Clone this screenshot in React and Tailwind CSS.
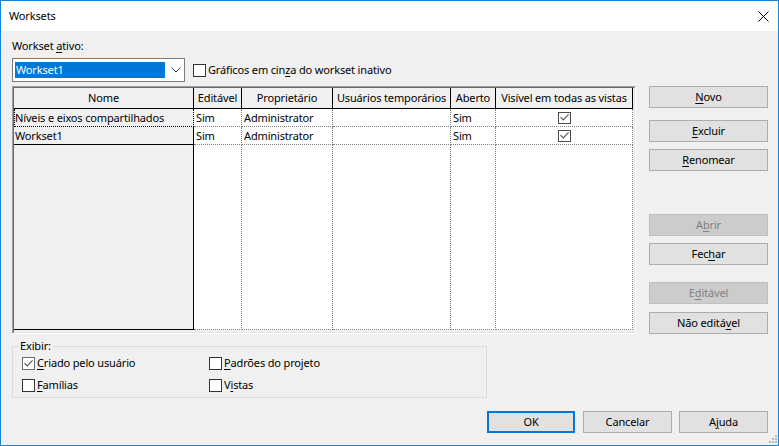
import React from "react";

const U = ({ children }) => <span className="underline underline-offset-[2px] decoration-[1px]">{children}</span>;

function CheckMark({ color = "#555555" }) {
  return (
    <svg width="11" height="11" viewBox="0 0 11 11" className="block">
      <path d="M1.5 5.2 L4.3 8 L9.6 2.4" fill="none" stroke={color} strokeWidth="1.1" />
    </svg>
  );
}

function Box({ checked, light }) {
  return (
    <div
      className={
        "w-[13px] h-[13px] border bg-white flex items-center justify-center shrink-0 " +
        (light ? "border-[#6d6d6d]" : "border-[#333333]")
      }
    >
      {checked && <CheckMark />}
    </div>
  );
}

function Btn({ children, disabled, className = "" }) {
  return (
    <div
      className={
        "h-[22px] flex items-center justify-center border leading-[16px] " +
        (disabled
          ? "bg-[#cccccc] border-[#bfbfbf] text-[#838383] "
          : "bg-[#e1e1e1] border-[#adadad] text-black ") +
        className
      }
    >
      {children}
    </div>
  );
}

function DataCol({ w, header, cells, center }) {
  return (
    <div className={w + " flex flex-col shrink-0"}>
      <div className="h-[21px] border-r border-b border-black flex items-center justify-center whitespace-nowrap overflow-hidden">
        {header}
      </div>
      {cells.map((c, i) => (
        <div
          key={i}
          className={
            "h-[18px] bg-white border-r border-b border-dotted border-[#808080] flex items-center whitespace-nowrap overflow-hidden " +
            (center ? "justify-center" : "pl-[2px]")
          }
        >
          {c}
        </div>
      ))}
      <div className="flex-1 bg-white border-r border-b border-dotted border-[#808080]" />
    </div>
  );
}

function CellCheck() {
  return (
    <div className="w-[13px] h-[12px] border border-[#4a4a4a] bg-white flex items-center justify-center">
      <CheckMark color="#5a5a5a" />
    </div>
  );
}

function Opt({ checked, light, children }) {
  return (
    <div className="h-[16px] flex items-center">
      <Box checked={checked} light={light} />
      <span className="ml-[2px] leading-[16px]">{children}</span>
    </div>
  );
}

export default function App() {
  return (
    <div className="relative w-[779px] h-[446px] border border-[#1883d7] bg-[#f0f0f0] flex flex-col overflow-hidden font-['Noto_Sans',sans-serif] text-[11px] text-black leading-[16px] tracking-[-0.15px]">
      {/* Title bar */}
      <div className="h-[30px] bg-white flex items-center justify-between pl-[8px] pr-[9px] shrink-0">
        <span>Worksets</span>
        <svg width="11" height="11" viewBox="0 0 11 11" className="block">
          <path d="M0.5 0.5 L10.5 10.5 M10.5 0.5 L0.5 10.5" stroke="#000" strokeWidth="1" />
        </svg>
      </div>

      {/* Body */}
      <div className="flex-1 flex flex-col pl-[11px] pr-[10px]">
        <div className="mt-[7px] h-[16px]">
          Workset <U>a</U>tivo:
        </div>

        <div className="mt-[4px] flex items-center">
          <div className="w-[173px] h-[24px] border border-[#7a7a7a] bg-white flex items-center pl-[2px]">
            <div className="w-[150px] h-[16px] bg-[#0078d7] text-white pl-[1px] leading-[16px]">Workset1</div>
            <svg width="10" height="6" viewBox="0 0 10 6" className="ml-[6px] block">
              <path d="M0.5 0.5 L5 5 L9.5 0.5" fill="none" stroke="#444" strokeWidth="1" />
            </svg>
          </div>
          <div className="ml-[8px]">
            <Box />
          </div>
          <span className="ml-[2px]">
            Gráficos em cin<U>z</U>a do workset inativo
          </span>
        </div>

        {/* Main row */}
        <div className="mt-[4px] flex">
          <div className="w-[624px] h-[248px] border-t border-l border-[#a0a0a0] border-r-white border-b-white border-r border-b">
            <div className="w-full h-full border-t border-l border-t-[#696969] border-l-[#696969] border-r border-b border-r-[#e3e3e3] border-b-[#e3e3e3] bg-[#f0f0f0]">
              <div className="h-[242px] flex">
                {/* Nome */}
                <div className="w-[180px] flex flex-col shrink-0">
                  <div className="h-[21px] border-r border-b border-black flex items-center justify-center">Nome</div>
                  <div className="h-[18px] border-l border-r border-b border-dotted border-black flex items-center whitespace-nowrap">
                    Níveis e eixos compartilhados
                  </div>
                  <div className="h-[18px] border-r border-b border-black flex items-center pl-[1px]">Workset1</div>
                  <div className="flex-1 border-r border-b border-black" />
                </div>
                <DataCol w="w-[48px]" header="Editável" cells={["Sim", "Sim"]} />
                <DataCol w="w-[91px]" header="Proprietário" cells={["Administrator", "Administrator"]} />
                <DataCol w="w-[118px]" header="Usuários temporários" cells={["", ""]} />
                <DataCol w="w-[45px]" header="Aberto" cells={["Sim", "Sim"]} />
                <DataCol
                  w="w-[137px]"
                  header="Visível em todas as vistas"
                  cells={[<CellCheck key="a" />, <CellCheck key="b" />]}
                  center
                />
              </div>
            </div>
          </div>

          <div className="ml-[13px] w-[119px] flex flex-col">
            <Btn>
              <U>N</U>ovo
            </Btn>
            <Btn className="mt-[12px]">
              <U>E</U>xcluir
            </Btn>
            <Btn className="mt-[7px]">
              <U>R</U>enomear
            </Btn>
            <Btn className="mt-[43px]" disabled>
              A<U>b</U>rir
            </Btn>
            <Btn className="mt-[7px]">
              Fec<U>h</U>ar
            </Btn>
            <Btn className="mt-[17px]" disabled>
              E<U>d</U>itável
            </Btn>
            <Btn className="mt-[8px]">
              Não editá<U>v</U>el
            </Btn>
          </div>
        </div>

        {/* Exibir group */}
        <fieldset className="mt-[4px] w-[475px] border border-[#dcdcdc]">
          <legend className="ml-[6px] px-[1px] leading-[16px]">Exibir:</legend>
          <div className="grid grid-cols-[187px_1fr] gap-y-[6px] pt-[1px] pb-[4px] pl-[9px]">
            <Opt checked light>
              <U>C</U>riado pelo usuário
            </Opt>
            <Opt>
              <U>P</U>adrões do projeto
            </Opt>
            <Opt>
              <U>F</U>amílias
            </Opt>
            <Opt>
              V<U>i</U>stas
            </Opt>
          </div>
        </fieldset>

        {/* Bottom buttons */}
        <div className="mt-[13px] flex justify-end">
          <div className="w-[88px] h-[22px] border-2 border-[#0078d7] bg-[#e1e1e1] flex items-center justify-center">OK</div>
          <Btn className="w-[89px] ml-[8px]">Cancelar</Btn>
          <Btn className="w-[89px] ml-[7px]">
            A<U>j</U>uda
          </Btn>
        </div>
      </div>

      {/* Resize grip */}
      <svg width="9" height="9" viewBox="0 0 9 9" className="absolute right-[1px] bottom-[1px] block">
        <rect x="7" y="0" width="2" height="2" fill="#b8b8b8" />
        <rect x="4" y="3" width="2" height="2" fill="#b8b8b8" />
        <rect x="7" y="3" width="2" height="2" fill="#b8b8b8" />
        <rect x="1" y="6" width="2" height="2" fill="#b8b8b8" />
        <rect x="4" y="6" width="2" height="2" fill="#b8b8b8" />
        <rect x="7" y="6" width="2" height="2" fill="#b8b8b8" />
      </svg>
    </div>
  );
}
